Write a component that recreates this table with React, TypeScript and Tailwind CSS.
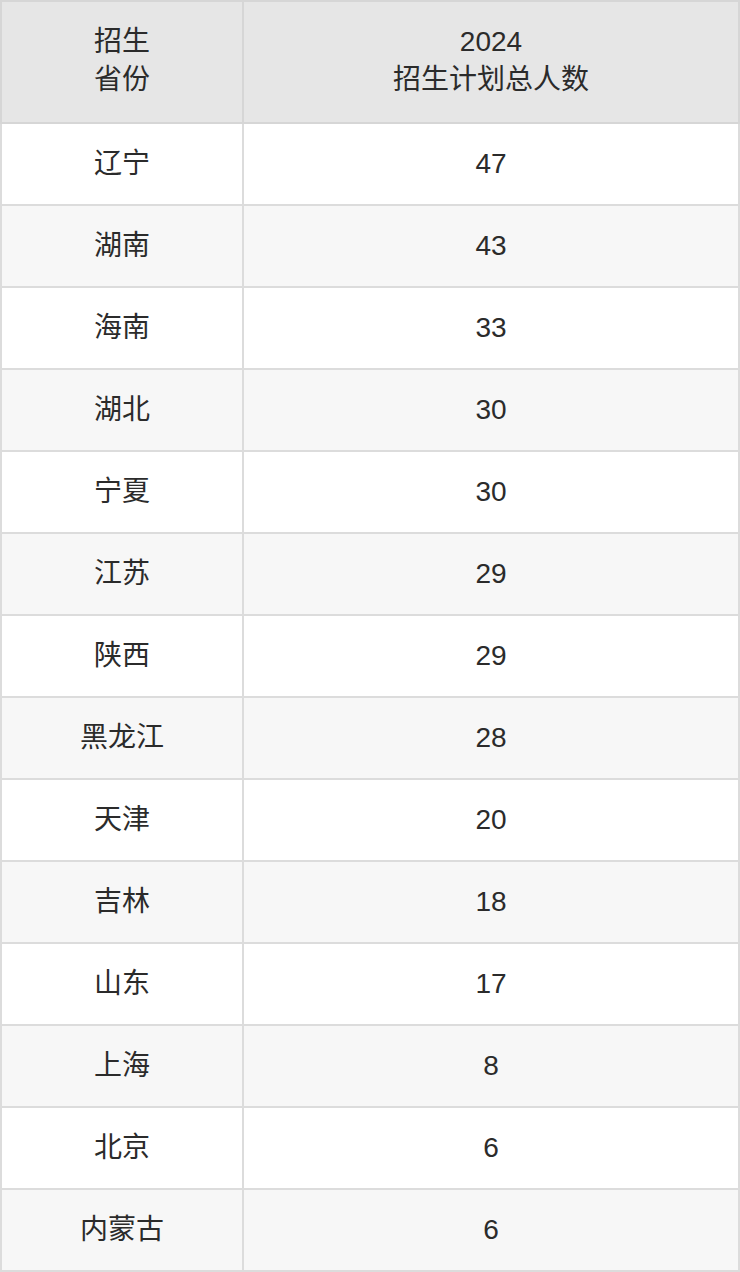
const rows: [string, number][] = [
  ["辽宁", 47],
  ["湖南", 43],
  ["海南", 33],
  ["湖北", 30],
  ["宁夏", 30],
  ["江苏", 29],
  ["陕西", 29],
  ["黑龙江", 28],
  ["天津", 20],
  ["吉林", 18],
  ["山东", 17],
  ["上海", 8],
  ["北京", 6],
  ["内蒙古", 6],
];

export default function App() {
  return (
    <div
      className="w-[740px] bg-white text-[#2b2b2b]"
      style={{ fontFamily: '"Liberation Sans", "Noto Sans CJK SC", sans-serif' }}
    >
      <table className="w-full border-collapse text-[28px] leading-[38px]">
        <thead>
          <tr className="bg-[#e6e6e6]">
            <th className="w-[242px] h-[122px] pb-[2px] border-2 border-[#d6d6d6] font-normal text-center">
              招生
              <br />
              省份
            </th>
            <th className="h-[122px] pb-[2px] border-2 border-[#d6d6d6] font-normal text-center">
              2024
              <br />
              招生计划总人数
            </th>
          </tr>
        </thead>
        <tbody>
          {rows.map(([p, n], i) => (
            <tr key={p} className={i % 2 === 0 ? "bg-white" : "bg-[#f7f7f7]"}>
              <td className="h-[82px] border-2 border-[#dcdcdc] text-center">{p}</td>
              <td className="h-[82px] border-2 border-[#dcdcdc] text-center">{n}</td>
            </tr>
          ))}
        </tbody>
      </table>
    </div>
  );
}
